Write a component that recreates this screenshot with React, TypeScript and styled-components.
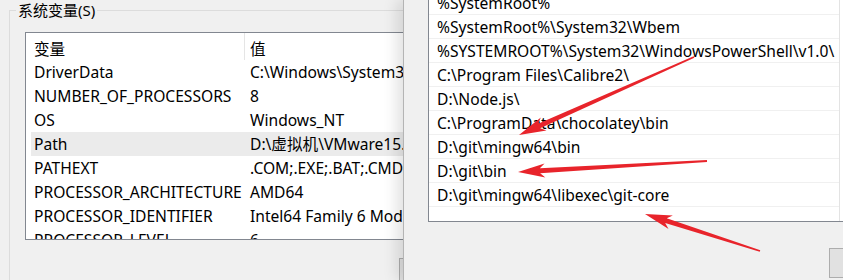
import React from 'react';
import styled, { createGlobalStyle } from 'styled-components';

const GlobalStyle = createGlobalStyle`
  html, body {
    margin: 0;
    padding: 0;
    background: #f0f0f0;
    overflow: hidden;
  }
  body {
    font-family: "Noto Sans", "Noto Sans CJK SC", sans-serif;
    font-size: 15.6px;
    color: #000;
  }
`;

const Page = styled.div`
  position: relative;
  display: flex;
  width: 843px;
  height: 280px;
  overflow: hidden;
`;

const SystemWindow = styled.div`
  width: 403px;
  flex: none;
  overflow: hidden;
`;

const GroupBox = styled.fieldset`
  margin: 0 0 0 9px;
  padding: 0;
  width: 480px;
  min-height: 300px;
  border: 1px solid #dcdcdc;
  box-sizing: border-box;
`;

const GroupTitle = styled.legend`
  margin-left: 6px;
  padding: 0 2px;
  line-height: 20px;
  font-size: 15px;
`;

const ListView = styled.div`
  margin: 12px 0 0 15px;
  width: 440px;
  height: 208px;
  background: #fff;
  border: 1px solid #828790;
  box-sizing: border-box;
  overflow: hidden;
`;

const HeaderRow = styled.div`
  display: grid;
  grid-template-columns: 214px 1fr;
  margin-left: 5px;
  height: 27px;
`;

const HeaderCell = styled.div<{ $divider?: boolean }>`
  padding: 5px 0 0 ${(p) => (p.$divider ? 3 : 5)}px;
  line-height: 22px;
  white-space: nowrap;
  border-right: ${(p) => (p.$divider ? '1px solid #e5e5e5' : 'none')};
`;

const VarRow = styled.div<{ $selected?: boolean }>`
  display: grid;
  grid-template-columns: 216px 1fr;
  margin-left: 5px;
  height: 24px;
  line-height: 24px;
  background: ${(p) => (p.$selected ? '#ebebeb' : 'transparent')};
`;

const Cell = styled.div`
  padding-left: 3px;
  white-space: nowrap;
  overflow: hidden;
`;

const LeftButtons = styled.div`
  display: flex;
  margin: 18px 0 0 389px;
`;

const DialogButton = styled.button`
  width: 100px;
  height: 30px;
  flex: none;
  background: #e1e1e1;
  border: 1px solid #adadad;
  font-family: inherit;
  font-size: 15px;
`;

const EditWindow = styled.div`
  flex: 1;
  background: #f0f0f0;
  border-left: 1px solid #b4b4b4;
  box-shadow: -6px 0 14px rgba(0, 0, 0, 0.12);
  overflow: hidden;
  z-index: 1;
`;

const PathList = styled.div`
  margin-left: 24px;
  width: 460px;
  height: 222px;
  background: #fff;
  border-left: 1px solid #828790;
  border-bottom: 1px solid #828790;
  box-sizing: border-box;
  overflow: hidden;
`;

const PathItems = styled.div`
  margin-top: -9px;
  width: 410px;
  height: 240px;
  border-right: 1px solid #e3e3e3;
`;

const PathItem = styled.div`
  height: 23px;
  line-height: 24px;
  padding-left: 8px;
  border-bottom: 1px solid #f0f0f0;
  white-space: nowrap;
`;

const EditFooter = styled.div`
  display: flex;
  margin: 26px 0 0 425px;
`;

const Overlay = styled.svg`
  position: absolute;
  left: 0;
  top: 0;
  pointer-events: none;
  z-index: 2;
`;

const variables = [
  ['DriverData', 'C:\\Windows\\System32\\Drivers\\DriverData'],
  ['NUMBER_OF_PROCESSORS', '8'],
  ['OS', 'Windows_NT'],
  ['Path', 'D:\\虚拟机\\VMware15.5\\bin\\;C:\\Windows\\system32'],
  ['PATHEXT', '.COM;.EXE;.BAT;.CMD;.VBS;.VBE;.JS'],
  ['PROCESSOR_ARCHITECTURE', 'AMD64'],
  ['PROCESSOR_IDENTIFIER', 'Intel64 Family 6 Model 142 Stepping 10'],
  ['PROCESSOR_LEVEL', '6'],
];

const paths = [
  '%SystemRoot%',
  '%SystemRoot%\\System32\\Wbem',
  '%SYSTEMROOT%\\System32\\WindowsPowerShell\\v1.0\\',
  'C:\\Program Files\\Calibre2\\',
  'D:\\Node.js\\',
  'C:\\ProgramData\\chocolatey\\bin',
  'D:\\git\\mingw64\\bin',
  'D:\\git\\bin',
  'D:\\git\\mingw64\\libexec\\git-core',
  '',
];

const arrows = [
  { from: [694, 57], to: [519, 135] },
  { from: [707, 161], to: [518, 172] },
  { from: [760, 251], to: [645, 214] },
];

type ArrowProps = { from: number[]; to: number[] };

// tapered red marker arrow, thin at the tail
const Arrow = ({ from, to }: ArrowProps) => {
  const dx = to[0] - from[0];
  const dy = to[1] - from[1];
  const len = Math.hypot(dx, dy);
  const ux = dx / len;
  const uy = dy / len;
  const nx = -uy;
  const ny = ux;
  const at = (d: number, w: number) =>
    `${from[0] + ux * d + nx * w},${from[1] + uy * d + ny * w}`;
  const neck = len - 22;
  const pts = [
    at(0, 0.9),
    at(neck, 2.5),
    at(len - 27, 7),
    at(len, 0),
    at(len - 27, -7),
    at(neck, -2.5),
    at(0, -0.9),
  ].join(' ');
  return <polygon points={pts} fill="#e8242b" />;
};

const App = () => (
  <>
    <GlobalStyle />
    <Page>
      <SystemWindow>
        <GroupBox>
          <GroupTitle>系统变量(S)</GroupTitle>
          <ListView>
            <HeaderRow>
              <HeaderCell $divider>变量</HeaderCell>
              <HeaderCell>值</HeaderCell>
            </HeaderRow>
            {variables.map(([name, value]) => (
              <VarRow key={name} $selected={name === 'Path'}>
                <Cell>{name}</Cell>
                <Cell>{value}</Cell>
              </VarRow>
            ))}
          </ListView>
          <LeftButtons>
            <DialogButton>新建(W)...</DialogButton>
          </LeftButtons>
        </GroupBox>
      </SystemWindow>
      <EditWindow>
        <PathList>
          <PathItems>
            {paths.map((p, i) => (
              <PathItem key={i}>{p}</PathItem>
            ))}
          </PathItems>
        </PathList>
        <EditFooter>
          <DialogButton>确定</DialogButton>
        </EditFooter>
      </EditWindow>
      <Overlay width={843} height={280} viewBox="0 0 843 280">
        {arrows.map((a, i) => (
          <Arrow key={i} from={a.from} to={a.to} />
        ))}
      </Overlay>
    </Page>
  </>
);

export default App;
